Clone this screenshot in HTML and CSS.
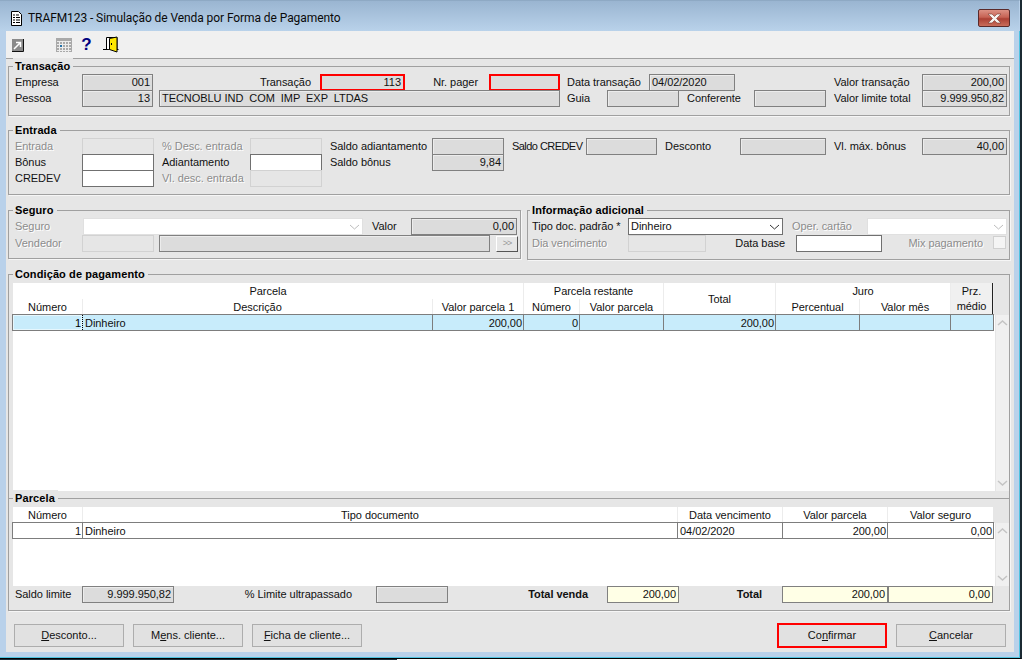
FILE: index.html
```html
<!DOCTYPE html>
<html lang="pt">
<head>
<meta charset="utf-8">
<title>TRAFM123</title>
<link rel="stylesheet" href="styles.css">
</head>
<body>
<div class="window">
  <header class="titlebar">
    <svg class="doc-icon" width="13" height="15" viewBox="0 0 13 15"><path d="M1.5.5h7l3 3v11h-10z" fill="#fff" stroke="#000"/><path d="M3 4h2M6 4h3M3 6.500h2M6 6.500h4M3 9h2M6 9h4M3 11.500h2M6 11.500h4" stroke="#000"/></svg>
    <span class="title-text">TRAFM123 - Simulação de Venda por Forma de Pagamento</span>
    <div class="close"><svg width="17" height="11" viewBox="0 0 17 11"><path d="M2 1h4l2.500 2.500L11 1h4l-4.500 4.500L15 10h-4L8.500 7.500 6 10H2l4.500-4.500z" fill="#f6f2f0" stroke="#7a3a30" stroke-width=".6"/></svg></div>
  </header>
  <div class="client">
    <nav class="toolbar">
      <svg class="t-arrow" width="12" height="13" viewBox="0 0 12 13"><rect width="11" height="12" fill="#8a8a8a"/><path d="M11.500 0v12.500H0" fill="none" stroke="#111"/><path d="M2 10 8 4M4 3.500h4.500V8" stroke="#fff" stroke-width="1.500" fill="none"/></svg>
      <svg class="t-cal" width="16" height="14" viewBox="0 0 16 14"><rect width="16" height="14" fill="#a9a9a9"/><path d="M1 3.500h14M1 6.500h14M1 9.500h14M1 12.500h14M3.500 3v11M6.500 3v11M9.500 3v11M12.500 3v11" stroke="#ececec"/><rect x="4" y="7" width="2" height="2" fill="#1f6fa8"/></svg>
      <span class="t-help">?</span>
      <svg class="t-door" width="16" height="17" viewBox="0 0 16 17"><path d="M0 13.500h15.500" stroke="#000"/><path d="M3.500 13V1.500h10.500v12" fill="#fff" stroke="#000"/><path d="M6.500 2.500l7.500-1.500v15l-7.500-2.500z" fill="#ffe800" stroke="#000"/><path d="M8.500 7v2" stroke="#000"/></svg>
    </nav>

    <section class="group g-trans">
      <h2 class="gt">Transação</h2>
      <div class="row r-t1">
        <span class="lb">Empresa</span><span class="f num">001</span>
        <span class="lb right pr9">Transação</span><span class="f num red">113</span>
        <span class="lb right pr11">Nr. pager</span><span class="f red"></span>
        <span class="lb pl7">Data transação</span><span class="f">04/02/2020</span>
        <span class="lb pl99">Valor transação</span><span class="f num">200,00</span>
      </div>
      <div class="row r-t2">
        <span class="lb">Pessoa</span><span class="f num">13</span><span></span>
        <span class="f name">TECNOBLU IND &nbsp;COM &nbsp;IMP &nbsp;EXP &nbsp;LTDAS</span>
        <span class="lb pl7">Guia</span><span class="f"></span>
        <span class="lb pl8">Conferente</span><span class="f"></span>
        <span class="lb pl8">Valor limite total</span><span class="f num">9.999.950,82</span>
      </div>
    </section>

    <section class="group g-ent">
      <h2 class="gt">Entrada</h2>
      <div class="row r-e1">
        <span class="lb dis">Entrada</span><span class="f off"></span>
        <span class="lb dis pl8">% Desc. entrada</span><span class="f off"></span>
        <span class="lb pl8">Saldo adiantamento</span><span class="f"></span>
        <span class="lb pl8 tight">Saldo CREDEV</span><span class="f"></span>
        <span class="lb pl8">Desconto</span><span class="f"></span>
        <span class="lb pl8">Vl. máx. bônus</span><span class="f num">40,00</span>
      </div>
      <div class="row r-e1">
        <span class="lb">Bônus</span><span class="f white"></span>
        <span class="lb pl8">Adiantamento</span><span class="f white"></span>
        <span class="lb pl8">Saldo bônus</span><span class="f num">9,84</span>
      </div>
      <div class="row r-e1">
        <span class="lb">CREDEV</span><span class="f white"></span>
        <span class="lb dis pl8">Vl. desc. entrada</span><span class="f off"></span>
      </div>
    </section>

    <div class="pair">
      <section class="group g-seg">
        <h2 class="gt">Seguro</h2>
        <div class="row r-s1">
          <span class="lb dis">Seguro</span>
          <span class="sel sel-off"><svg width="11" height="6" viewBox="0 0 11 6"><path d="M1 1l4.500 4L10 1" fill="none" stroke="#bdbdbd"/></svg></span>
          <span class="lb pl9">Valor</span><span class="f num">0,00</span>
        </div>
        <div class="row r-s2">
          <span class="lb dis">Vendedor</span><span class="f off"></span><span></span>
          <span class="f"></span><span></span>
          <span class="more">&gt;&gt;</span>
        </div>
      </section>
      <section class="group g-info">
        <h2 class="gt">Informação adicional</h2>
        <div class="row r-i1">
          <span class="lb">Tipo doc. padrão *</span>
          <span class="sel"><span>Dinheiro</span><svg width="11" height="6" viewBox="0 0 11 6"><path d="M1 1l4.500 4L10 1" fill="none" stroke="#333"/></svg></span>
          <span class="lb dis pl9">Oper. cartão</span>
          <span class="sel sel-off"><svg width="11" height="6" viewBox="0 0 11 6"><path d="M1 1l4.500 4L10 1" fill="none" stroke="#bdbdbd"/></svg></span>
        </div>
        <div class="row r-i2">
          <span class="lb dis">Dia vencimento</span><span class="f off"></span>
          <span class="lb right pr11">Data base</span><span class="f white"></span>
          <span class="lb dis right pr10">Mix pagamento</span><span class="check"></span>
        </div>
      </section>
    </div>

    <section class="group g-cond">
      <h2 class="gt">Condição de pagamento</h2>
      <div class="grid-wrap">
        <div class="gh gh1">
          <span class="hc c-parcela">Parcela</span>
          <span class="hc c-rest">Parcela restante</span>
          <span class="hc c-total">Total</span>
          <span class="hc c-juro">Juro</span>
          <span class="hc c-prz">Prz.<br>médio</span>
          <span class="hc">Número</span>
          <span class="hc">Descrição</span>
          <span class="hc">Valor parcela 1</span>
          <span class="hc">Número</span>
          <span class="hc">Valor parcela</span>
          <span class="hc">Percentual</span>
          <span class="hc">Valor mês</span>
        </div>
        <div class="grid-body gb1">
          <div class="rows">
            <div class="dr dr1 sel-row">
              <span class="dc num focus">1</span><span class="dc">Dinheiro</span><span class="dc num">200,00</span><span class="dc num">0</span><span class="dc"></span><span class="dc num">200,00</span><span class="dc"></span><span class="dc"></span><span class="dc"></span>
            </div>
          </div>
          <div class="scroll">
            <svg width="11" height="6" viewBox="0 0 11 6"><path d="M1 5l4.500-4L10 5" fill="none" stroke="#c4c4c4" stroke-width="1.500"/></svg>
            <svg width="11" height="6" viewBox="0 0 11 6"><path d="M1 1l4.500 4L10 1" fill="none" stroke="#c4c4c4" stroke-width="1.500"/></svg>
          </div>
        </div>
      </div>

      <div class="sub">
        <h2 class="gt">Parcela</h2>
        <div class="gh gh2">
          <span class="hc">Número</span>
          <span class="hc">Tipo documento</span>
          <span class="hc">Data vencimento</span>
          <span class="hc">Valor parcela</span>
          <span class="hc">Valor seguro</span>
        </div>
        <div class="grid-body gb2">
          <div class="rows">
            <div class="dr dr2">
              <span class="dc num">1</span><span class="dc">Dinheiro</span><span class="dc">04/02/2020</span><span class="dc num">200,00</span><span class="dc num">0,00</span>
            </div>
          </div>
          <div class="scroll">
            <svg width="11" height="6" viewBox="0 0 11 6"><path d="M1 5l4.500-4L10 5" fill="none" stroke="#c4c4c4" stroke-width="1.500"/></svg>
            <svg width="11" height="6" viewBox="0 0 11 6"><path d="M1 1l4.500 4L10 1" fill="none" stroke="#c4c4c4" stroke-width="1.500"/></svg>
          </div>
        </div>
        <div class="row r-foot">
          <span class="lb">Saldo limite</span><span class="f num">9.999.950,82</span>
          <span class="lb right pr24">% Limite ultrapassado</span><span class="f"></span>
          <span class="lb right pr19 bold">Total venda</span><span class="f num yellow">200,00</span>
          <span class="lb right pr20 bold">Total</span><span class="f num yellow">200,00</span><span class="f num yellow">0,00</span>
        </div>
      </div>
    </section>

    <footer class="buttons">
      <button class="btn"><u>D</u>esconto...</button>
      <button class="btn">M<u>e</u>ns. cliente...</button>
      <button class="btn"><u>F</u>icha de cliente...</button>
      <span class="btn-space"></span>
      <button class="btn btn-red">Co<u>n</u>firmar</button>
      <button class="btn"><u>C</u>ancelar</button>
    </footer>
  </div>
</div>
<div class="taskline"></div>
</body>
</html>
```

FILE: styles.css
```css
* { box-sizing: border-box; }
html, body { margin: 0; padding: 0; }
body {
  width: 1022px; height: 660px; overflow: hidden; background: #fff;
  font: 11px/16px "Liberation Sans", Arial, sans-serif; letter-spacing: -.05px; color: #111; position: relative;
}
.window {
  width: 1022px; height: 659px;
  background: #b9d1ea;
  border-right: 2px solid #1b2a33;
  border-bottom: 1px solid #000;
  box-shadow: inset -1px -1px 0 #4fc3e0;
  padding: 0 6px 6px 6px;
  display: flex; flex-direction: column;
}
.titlebar {
  margin: 0 -6px; padding: 0 9px 0 10px;
  height: 31px; flex: none;
  display: flex; align-items: center;
  background: linear-gradient(#9ab5d1 0, #b9d2ea 100%);
  border-top: 1px solid #8ea9c4;
  border-right: 1px solid #b9d1ea;
}
.doc-icon { margin-top: 4px; }
.title-text { margin-left: 5px; font: 12px/16px Roboto, sans-serif; margin-top: 4px; color: #0a0a0a; letter-spacing: -.08px; }
.close {
  margin-left: auto; width: 32px; height: 18px; margin-top: 4px;
  background: linear-gradient(#dc9184 0, #c66254 45%, #ab4034 55%, #c96d5b 100%);
  border: 1px solid #5a2a2a; border-radius: 2px;
  display: flex; align-items: center; justify-content: center;
}
.client { width: 1008px; flex: 1; background: #e6e6e6; }
.toolbar {
  height: 28px; background: #f0f0f0; border-bottom: 1px solid #a0a0a0;
  display: flex; align-items: center; padding-left: 6px;
}
.t-arrow { margin-top: 1px; }
.t-cal { margin-left: 32px; }
.t-help {
  margin-left: 9px; width: 11px; font: bold 17px/16px "Liberation Sans", sans-serif; color: #00007f; text-align: center;
}
.t-door { margin-left: 11px; }

.group { position: relative; border: 1px solid #a0a0a0; margin-left: 2px; padding-left: 6px; width: 1002px; box-shadow: 1px 1px 0 #f6f6f6; }
.gt {
  position: absolute; left: 4px; top: -9px; margin: 0; padding: 0 3px 0 2px;
  font: bold 11px/16px "Liberation Sans", sans-serif; letter-spacing: .1px; background: #e6e6e6; color: #000;
}
.g-trans { margin-top: 7px; padding-top: 7px; padding-bottom: 8px; height: 50px; }
.g-ent { margin-top: 14px; padding-top: 7px; height: 65px; }
.pair { display: flex; align-items: flex-start; gap: 6px; margin-top: 15px; margin-left: 2px; }
.g-seg { margin-left: 0; width: 513px; height: 49px; padding-top: 7px; }
.g-info { margin-left: 0; width: 483px; height: 50px; padding-top: 7px; padding-left: 4px; }
.g-info .gt { left: 2px; }
.g-cond { margin-top: 14px; height: 337px; padding: 8px 0 0 4px; }

.row { display: grid; height: 16px; }
.r-t1 { grid-template-columns: 67px 71px 167px 85px 84px 71px 89px 86px 187px 85px; }
.r-t2 { grid-template-columns: 67px 71px 6px 401px 47px 72px 75px 72px 96px 85px; }
.r-e1 { grid-template-columns: 67px 72px 96px 72px 110px 72px 82px 71px 83px 86px 96px 85px; }
.r-s1 { height: 17px; grid-template-columns: 68px 280px 48px 106px; }
.r-s2 { height: 16px; grid-template-columns: 67px 72px 5px 331px 6px 22px; }
.r-i1 { height: 17px; grid-template-columns: 96px 155px 84px 140px; }
.r-i2 { height: 16px; grid-template-columns: 96px 78px 90px 86px 111px 13px; }
.r-foot { height: 17px; margin-left: 4px; grid-template-columns: 67px 92px 202px 72px 159px 72px 103px 106px 105px; }

.lb { white-space: nowrap; line-height: 16px; }
.tight { letter-spacing: -.55px; }
.dis { color: #8c8c8c; text-shadow: 1px 1px 0 #fff; }
.right { text-align: right; }
.bold { font-weight: bold; }
.pr9 { padding-right: 9px; } .pr10 { padding-right: 10px; } .pr11 { padding-right: 11px; } .pr19 { padding-right: 19px; } .pr20 { padding-right: 20px; } .pr24 { padding-right: 24px; }
.pl7 { padding-left: 7px; } .pl8 { padding-left: 8px; } .pl9 { padding-left: 9px; } .pl99 { padding-left: 99px; }

.f {
  height: 17px; border: 1px solid #808080; background: #dcdcdc;
  box-shadow: inset 1px 1px 0 #ececec;
  padding: 0 2px; line-height: 15px; white-space: nowrap; overflow: hidden;
}
.num { text-align: right; }
.off { background: #e6e6e6; border-color: #d2d2d2; box-shadow: none; }
.white { background: #fff; border-color: #707070; box-shadow: none; }
.yellow { background: #ffffe6; box-shadow: none; }
.red { border: 2px solid #f00; box-shadow: none; line-height: 13px; }
.sel {
  height: 17px; background: #fff; border: 1px solid #707070; padding: 0 2px;
  display: flex; align-items: center; justify-content: space-between; line-height: 15px;
}
.sel-off { border-color: #e0e0e0; justify-content: flex-end; }
.more {
  height: 16px; margin-top: 1px; background: #e6e6e6; border: 1px solid #fff;
  border-right-color: #555; border-bottom-color: #555; color: #999;
  font-size: 9px; line-height: 13px; text-align: center; letter-spacing: -1px;
}
.check { width: 13px; height: 13px; margin-top: 1px; background: #f4f4f4; border: 1px solid #d0d0d0; }

.grid-wrap { width: 996px; }
.gh { display: grid; gap: 0 1px; background-color: #ececec; }
.gh1 {
  width: 981px; height: 32px;
  grid-template-columns: 69px 349px 90px 55px 83px 111px 83px 90px 42px;
  grid-template-rows: 16px 16px;
}
.gh2 {
  width: 980px; height: 16px; margin-left: 2px;
  grid-template-columns: 69px 594px 104px 104px 105px;
}
.hc { background: #fff; text-align: center; line-height: 16px; white-space: nowrap; }
.gh1 .c-parcela { grid-column: 1 / 4; grid-row: 1; }
.gh1 .c-rest { grid-column: 4 / 6; grid-row: 1; }
.gh1 .c-total { grid-column: 6; grid-row: 1 / 3; line-height: 32px; }
.gh1 .c-juro { grid-column: 7 / 9; grid-row: 1; }
.gh1 .c-prz {
  grid-column: 9; grid-row: 1 / 3; background: #f0f0f0; line-height: 15px;
  border-right: 1px solid #222; border-bottom: 1px solid #777; padding-top: 1px;
}
.grid-body { display: flex; }
.gb1 { height: 176px; }
.gb2 { height: 63px; margin-left: 2px; width: 996px; }
.rows { width: 982px; background: #fff; }
.scroll {
  width: 13px; margin-left: 1px; background: #f0f0f0; display: flex; flex-direction: column;
  justify-content: space-between; align-items: center; padding: 5px 0; flex: none;
}
.dr { display: grid; width: 982px; height: 17px; margin: -1px 0 0 -1px; border: 1px solid #7d7d7d; }
.dr1 { grid-template-columns: 70px 350px 91px 56px 84px 112px 84px 91px 1fr; }
.dr2 { grid-template-columns: 70px 595px 105px 105px 1fr; }
.dc { border-right: 1px solid #7d7d7d; padding: 0 1px 0 2px; line-height: 17px; white-space: nowrap; overflow: hidden; }
.dc:last-child { border-right: 0; }
.sel-row { background: #c8ecfb; }
.focus { color: #000; border-right: 1px dotted #000; box-shadow: inset 0 0 0 1px #e6f7fd; }

.sub { position: relative; margin: 7px 0 0 -4px; border-top: 1px solid #a0a0a0; padding: 8px 0 0 2px; }

.buttons { display: flex; gap: 9px; margin: 13px 0 0 8px; width: 992px; }
.btn-space { flex: 1; }
.btn {
  width: 110px; height: 23px; padding: 0; background: #e1e1e1; border: 1px solid #adadad;
  font: 11px/17px "Liberation Sans", sans-serif; color: #111;
}
.btn u { text-underline-offset: 1px; }
.btn-red { border: 2px solid #f00; height: 25px; margin-top: -1px; }

.taskline { position: absolute; left: 0; top: 659px; width: 397px; height: 1px; background: #1c2b38; }
```
